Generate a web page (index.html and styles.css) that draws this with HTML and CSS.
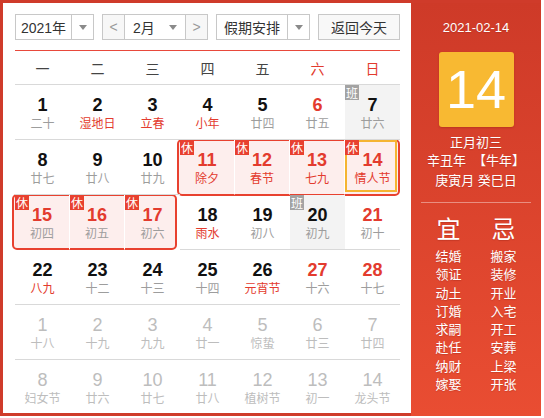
FILE: index.html
```html
<!DOCTYPE html>
<html lang="zh-CN">
<head>
<meta charset="utf-8">
<title>万年历</title>
<link rel="stylesheet" href="styles.css">
</head>
<body>
<div class="cal">
  <div class="main">
    <div class="toolbar">
      <div class="sel year"><span class="txt">2021年</span><span class="arr"><i class="caret"></i></span></div>
      <div class="sel month"><span class="nav prev">&lt;</span><span class="mtxt"><span>2月</span><i class="caret"></i></span><span class="nav next">&gt;</span></div>
      <div class="sel holiday"><span class="txt">假期安排</span><span class="arr"><i class="caret"></i></span></div>
      <div class="btn">返回今天</div>
    </div>
    <div class="week">
      <span>一</span><span>二</span><span>三</span><span>四</span><span>五</span><span class="we">六</span><span class="we">日</span>
    </div>
    <div class="days">
      <div class="hl hl1"></div>
      <div class="hl hl2"></div>

      <div class="cell"><b class="n">1</b><span class="l">二十</span></div>
      <div class="cell"><b class="n">2</b><span class="l red">湿地日</span></div>
      <div class="cell"><b class="n">3</b><span class="l red">立春</span></div>
      <div class="cell"><b class="n">4</b><span class="l red">小年</span></div>
      <div class="cell"><b class="n">5</b><span class="l">廿四</span></div>
      <div class="cell"><b class="n red">6</b><span class="l">廿五</span></div>
      <div class="cell work"><i class="tag ban">班</i><b class="n">7</b><span class="l">廿六</span></div>

      <div class="cell"><b class="n">8</b><span class="l">廿七</span></div>
      <div class="cell"><b class="n">9</b><span class="l">廿八</span></div>
      <div class="cell"><b class="n">10</b><span class="l">廿九</span></div>
      <div class="cell off"><i class="tag xiu">休</i><b class="n red">11</b><span class="l red">除夕</span></div>
      <div class="cell off"><i class="tag xiu">休</i><b class="n red">12</b><span class="l red">春节</span></div>
      <div class="cell off"><i class="tag xiu">休</i><b class="n red">13</b><span class="l red">七九</span></div>
      <div class="cell off end today"><i class="tag xiu">休</i><b class="n red">14</b><span class="l red">情人节</span></div>

      <div class="cell off"><i class="tag xiu">休</i><b class="n red">15</b><span class="l">初四</span></div>
      <div class="cell off"><i class="tag xiu">休</i><b class="n red">16</b><span class="l">初五</span></div>
      <div class="cell off end"><i class="tag xiu">休</i><b class="n red">17</b><span class="l">初六</span></div>
      <div class="cell"><b class="n">18</b><span class="l red">雨水</span></div>
      <div class="cell"><b class="n">19</b><span class="l">初八</span></div>
      <div class="cell work"><i class="tag ban">班</i><b class="n">20</b><span class="l">初九</span></div>
      <div class="cell"><b class="n red">21</b><span class="l">初十</span></div>

      <div class="cell"><b class="n">22</b><span class="l red">八九</span></div>
      <div class="cell"><b class="n">23</b><span class="l">十二</span></div>
      <div class="cell"><b class="n">24</b><span class="l">十三</span></div>
      <div class="cell"><b class="n">25</b><span class="l">十四</span></div>
      <div class="cell"><b class="n">26</b><span class="l red">元宵节</span></div>
      <div class="cell"><b class="n red">27</b><span class="l">十六</span></div>
      <div class="cell"><b class="n red">28</b><span class="l">十七</span></div>

      <div class="cell other"><b class="n">1</b><span class="l">十八</span></div>
      <div class="cell other"><b class="n">2</b><span class="l">十九</span></div>
      <div class="cell other"><b class="n">3</b><span class="l">九九</span></div>
      <div class="cell other"><b class="n">4</b><span class="l">廿一</span></div>
      <div class="cell other"><b class="n">5</b><span class="l">惊蛰</span></div>
      <div class="cell other"><b class="n">6</b><span class="l">廿三</span></div>
      <div class="cell other"><b class="n">7</b><span class="l">廿四</span></div>

      <div class="cell other last"><b class="n">8</b><span class="l">妇女节</span></div>
      <div class="cell other last"><b class="n">9</b><span class="l">廿六</span></div>
      <div class="cell other last"><b class="n">10</b><span class="l">廿七</span></div>
      <div class="cell other last"><b class="n">11</b><span class="l">廿八</span></div>
      <div class="cell other last"><b class="n">12</b><span class="l">植树节</span></div>
      <div class="cell other last"><b class="n">13</b><span class="l">初一</span></div>
      <div class="cell other last"><b class="n">14</b><span class="l">龙头节</span></div>
    </div>
  </div>
  <div class="side">
    <div class="date">2021-02-14</div>
    <div class="big">14</div>
    <div class="info">
      <div>正月初三</div>
      <div>辛丑年&nbsp;&nbsp;【牛年】</div>
      <div class="gz">庚寅月 癸巳日</div>
    </div>
    <div class="divider"></div>
    <div class="yj">
      <div class="col">
        <div class="hd">宜</div>
        <div>结婚</div><div>领证</div><div>动土</div><div>订婚</div><div>求嗣</div><div>赴任</div><div>纳财</div><div>嫁娶</div>
      </div>
      <div class="col">
        <div class="hd">忌</div>
        <div>搬家</div><div>装修</div><div>开业</div><div>入宅</div><div>开工</div><div>安葬</div><div>上梁</div><div>开张</div>
      </div>
    </div>
  </div>
</div>
</body>
</html>
```
FILE: styles.css
```css
* { box-sizing: border-box; margin: 0; padding: 0; }
body {
  margin: 0;
  background: #fff;
  font-family: "Liberation Sans", "Noto Sans CJK SC", sans-serif;
  color: #333;
}
.cal {
  display: flex;
  width: 541px;
  height: 416px;
  border: 3px solid #cf3b2a;
  border-right: none;
}
.main {
  width: 408px;
  padding: 11px 11px 0 12px;
  overflow: hidden;
}
.toolbar {
  display: flex;
  gap: 8px;
  height: 26px;
  font-size: 14px;
  color: #333;
}
.sel {
  display: flex;
  height: 26px;
  border: 1px solid #c8c8c8;
  background: #fff;
}
.sel .txt {
  flex: 1;
  display: flex;
  align-items: center;
  justify-content: center;
}
.sel .arr {
  width: 22px;
  border-left: 1px solid #c8c8c8;
  display: flex;
  align-items: center;
  justify-content: center;
}
.caret {
  display: block;
  width: 0;
  height: 0;
  border-left: 4px solid transparent;
  border-right: 4px solid transparent;
  border-top: 5px solid #8a8a8a;
}
.year { width: 79px; }
.month { width: 106px; }
.holiday { width: 94px; }
.nav {
  width: 22px;
  background: #f7f7f7;
  color: #9a9a9a;
  display: flex;
  align-items: center;
  justify-content: center;
  font-size: 14px;
}
.prev { border-right: 1px solid #c8c8c8; }
.next { border-left: 1px solid #c8c8c8; }
.mtxt {
  flex: 1;
  display: flex;
  align-items: center;
  justify-content: space-between;
  padding: 0 8px;
}
.btn {
  width: 82px;
  height: 26px;
  border: 1px solid #c8c8c8;
  background: #f8f8f8;
  display: flex;
  align-items: center;
  justify-content: center;
}
.week {
  margin-top: 10px;
  height: 35px;
  border-top: 1px solid #e8493b;
  border-bottom: 1px solid #d9d9d9;
  display: grid;
  grid-template-columns: repeat(7, 55px);
  align-items: center;
  justify-items: center;
  font-size: 14px;
  color: #444;
}
.week .we { color: #e23b2e; }
.days {
  position: relative;
  display: grid;
  grid-template-columns: repeat(7, 55px);
  grid-auto-rows: 55px;
}
.hl {
  position: absolute;
  z-index: 0;
  background: #fdeeed;
  border: 2px solid #e8412f;
  border-radius: 5px;
}
.hl1 { left: 162px; top: 54px; width: 223px; height: 57px; }
.hl2 { left: -3px; top: 109px; width: 165px; height: 56px; }
.cell {
  position: relative;
  z-index: 1;
  border-bottom: 1px solid #d9d9d9;
  padding-top: 10px;
  text-align: center;
  display: flex;
  flex-direction: column;
  align-items: center;
}
.cell.last { border-bottom: none; }
.cell.work { background: #f3f3f3; }
.cell.off { border-right: 1px solid #fff; border-bottom-color: transparent; }
.cell.off.end { border-right: none; }
.cell.today::after {
  content: "";
  position: absolute;
  left: 0;
  top: 0;
  right: 3px;
  bottom: 2px;
  border: 2px solid #f5b432;
}
.n {
  display: block;
  font-size: 18px;
  line-height: 21px;
  font-weight: bold;
  color: #111;
}
.l {
  display: block;
  font-size: 12px;
  line-height: 17px;
  color: #9d9d9d;
}
.n.red, .l.red { color: #e33b2e; }
.other .n, .other .l { color: #bdbdbd; }
.other .n { font-weight: normal; }
.tag {
  position: absolute;
  left: 0;
  top: 0;
  width: 14px;
  height: 15px;
  font-style: normal;
  font-size: 12px;
  line-height: 15px;
  color: #fff;
  text-align: center;
  font-family: "Noto Sans CJK SC", sans-serif;
  z-index: 2;
}
.xiu { background: #e8412f; }
.ban { background: #a3a3a3; }
.side {
  width: 130px;
  height: 413px;
  background: linear-gradient(#ce3a28, #e94d32);
  color: #fff;
  text-align: center;
  display: flex;
  flex-direction: column;
  align-items: center;
  text-shadow: 0 1px 1px rgba(120, 20, 10, 0.25);
}
.date {
  margin-top: 16px;
  font-size: 13px;
  line-height: 17px;
}
.big {
  margin-top: 16px;
  width: 75px;
  height: 75px;
  border-radius: 3px;
  background: #f8b932;
  font-size: 54px;
  line-height: 75px;
  text-shadow: none;
  box-shadow: 0 1px 2px rgba(120, 20, 10, 0.3);
}
.info {
  margin-top: 7px;
  font-size: 13px;
  line-height: 18px;
}
.info .gz { margin-top: 2px; }
.divider {
  margin-top: 12px;
  width: 110px;
  height: 1px;
  background: rgba(255, 255, 255, 0.4);
}
.yj {
  margin-top: 12px;
  display: flex;
}
.col {
  width: 55px;
  font-size: 13px;
  line-height: 18.3px;
}
.col .hd {
  font-size: 24px;
  line-height: 30px;
  margin-bottom: 3px;
}
```
